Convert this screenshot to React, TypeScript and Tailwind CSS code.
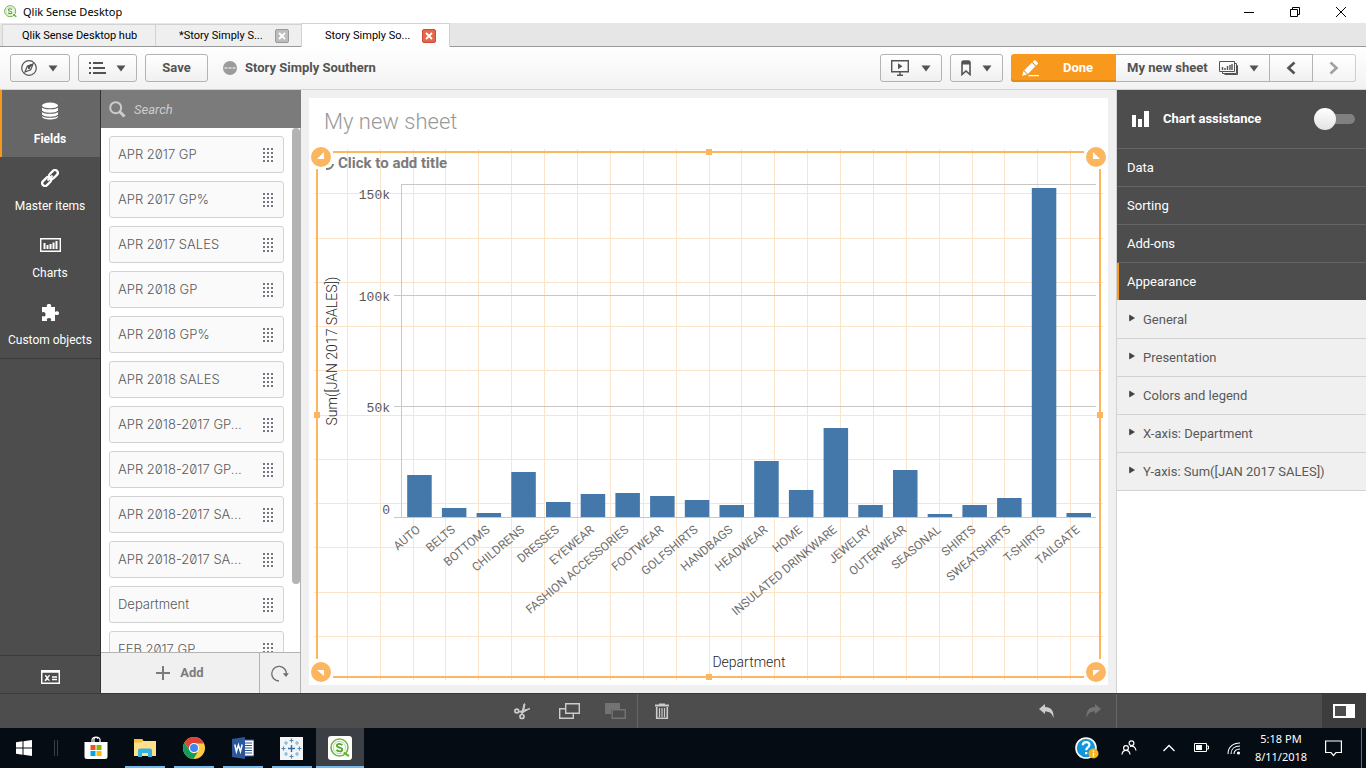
import type { ReactNode } from "react";

const fields = [
  "APR 2017 GP",
  "APR 2017 GP%",
  "APR 2017 SALES",
  "APR 2018 GP",
  "APR 2018 GP%",
  "APR 2018 SALES",
  "APR 2018-2017 GP...",
  "APR 2018-2017 GP...",
  "APR 2018-2017 SA...",
  "APR 2018-2017 SA...",
  "Department",
  "FEB 2017 GP",
];

const bars: [string, number][] = [
  ["AUTO", 475],
  ["BELTS", 508],
  ["BOTTOMS", 513],
  ["CHILDRENS", 472],
  ["DRESSES", 502],
  ["EYEWEAR", 494],
  ["FASHION ACCESSORIES", 493],
  ["FOOTWEAR", 496],
  ["GOLFSHIRTS", 500],
  ["HANDBAGS", 505],
  ["HEADWEAR", 461],
  ["HOME", 490],
  ["INSULATED DRINKWARE", 428],
  ["JEWELRY", 505],
  ["OUTERWEAR", 470],
  ["SEASONAL", 514],
  ["SHIRTS", 505],
  ["SWEATSHIRTS", 498],
  ["T-SHIRTS", 188],
  ["TAILGATE", 513],
];

const gridX = [347, 380, 413, 445, 478, 511, 544, 577, 610, 643, 676, 709, 741, 774, 807, 840, 873, 906, 939, 972, 1004, 1037, 1070];
const gridY = [193, 238, 282, 326, 370, 415, 459, 503, 547, 592, 636];

function Caret() {
  return (
    <svg width="10" height="7" viewBox="0 0 10 7" aria-hidden="true">
      <path d="M0.5 0.5h9L5 6.5z" fill="#545352" />
    </svg>
  );
}

function QlikMark({ size }: { size: number }) {
  return (
    <svg width={size} height={size} viewBox="0 0 20 20" fill="none" aria-hidden="true">
      <circle cx="9.500" cy="9.500" r="8.500" stroke="#6cb33f" strokeWidth="1.500" />
      <path d="M14.500 15l3.800 2.600" stroke="#6cb33f" strokeWidth="2.200" strokeLinecap="round" />
      <path d="M14.800 12.500a6.200 6.200 0 1 0-2.600 2.500" stroke="#a6d388" strokeWidth="0.900" />
      <path d="M12.200 7.200c-.6-1-1.500-1.400-2.700-1.400-1.600 0-2.700.7-2.700 1.800 0 2.700 5.500 1.200 5.500 3.800 0 1.200-1.100 1.900-2.800 1.900-1.400 0-2.400-.5-3-1.600" stroke="#5aa52e" strokeWidth="1.800" />
    </svg>
  );
}

function WindowBar() {
  return (
    <header className="flex h-[23px] shrink-0 items-center bg-white pr-[2px] pl-1">
      <QlikMark size={13} />
      <h1 className="flex-1 pl-[6px] font-['Noto_Sans'] text-[11px] leading-4 text-black">Qlik Sense Desktop</h1>
      <div className="flex items-center">
        <button aria-label="Minimize" className="grid h-[20px] w-[46px] place-items-center">
          <svg width="12" height="12"><path d="M1 6.500h10" stroke="#000" /></svg>
        </button>
        <button aria-label="Restore" className="grid h-[20px] w-[46px] place-items-center">
          <svg width="12" height="12" fill="none" stroke="#000"><path d="M1.500 3.500h7v7h-7zM3.500 3V1.500h7v7H9" /></svg>
        </button>
        <button aria-label="Close" className="grid h-[20px] w-[46px] place-items-center">
          <svg width="12" height="12" stroke="#000"><path d="M1 1l10 10M11 1L1 11" /></svg>
        </button>
      </div>
    </header>
  );
}

function TabClose({ active }: { active?: boolean }) {
  return (
    <button
      aria-label="Close tab"
      className={
        active
          ? "grid size-[14px] place-items-center rounded-[2px] border border-[#cf4a35] bg-[#e2694b]"
          : "grid size-[14px] place-items-center rounded-[2px] border border-[#999] bg-[#bdbdbd]"
      }
    >
      <svg width="8" height="8" stroke="#fff" strokeWidth="1.800"><path d="M1 1l6 6M7 1L1 7" /></svg>
    </button>
  );
}

function Tabs() {
  return (
    <nav aria-label="Open apps" className="flex h-6 shrink-0 items-end bg-[#e6e6e6] pl-[2px] text-[11px] leading-4 text-black shadow-[inset_0_-1px_0_#999]">
      <a href="#hub" className="mb-px flex h-[22px] w-[153px] items-center border-t border-l border-[#d2d2d2] bg-[#efefef] pl-[19px]">Qlik Sense Desktop hub</a>
      <div className="mb-px flex h-[22px] w-[146px] items-center justify-between border-t border-l border-[#d2d2d2] bg-[#efefef] pr-[12px] pl-[23px]">
        <a href="#story1">*Story Simply S...</a>
        <TabClose />
      </div>
      <div className="flex h-6 w-[149px] items-center justify-between border-x border-t border-[#d2d2d2] bg-white pr-[13px] pl-[23px]">
        <a href="#story2">Story Simply So...</a>
        <TabClose active />
      </div>
    </nav>
  );
}

const btn = "flex h-7 items-center rounded-[3px] border border-[#b3b3b3] bg-linear-to-b from-white to-[#f0f0f0]";

function Toolbar() {
  return (
    <div className="flex h-[43px] shrink-0 items-center border-b border-[#d2d2d2] bg-linear-to-b from-white to-[#f2f2f2] px-[10px] text-[13px] font-bold text-[#545352]">
      <button aria-label="Navigation" className={`${btn} w-[60px] justify-between pr-[11px] pl-[10px]`}>
        <svg width="16" height="16" viewBox="0 0 16 16" fill="none" stroke="#545352">
          <circle cx="8" cy="8" r="7.300" strokeWidth="1.200" />
          <path d="M12 4L9.700 9.700 4 12l2.300-5.700z" strokeWidth="1.200" />
          <path d="M12 4L6.300 6.300 8 8z" fill="#545352" />
          <circle cx="8" cy="8" r=".8" fill="#545352" />
        </svg>
        <Caret />
      </button>
      <button aria-label="App menu" className={`${btn} ml-2 w-[59px] justify-between px-[10px]`}>
        <svg width="17" height="12" viewBox="0 0 17 12" fill="#545352">
          <path d="M0 0h2v2H0zM0 5h2v2H0zM0 10h2v2H0zM4 0h10v2H4zM4 5h12v2H4zM4 10h13v2H4z" />
        </svg>
        <Caret />
      </button>
      <button className={`${btn} ml-2 w-[63px] justify-center`}>Save</button>
      <svg className="ml-[15px]" width="14" height="14" viewBox="0 0 14 14" aria-hidden="true">
        <circle cx="7" cy="7" r="7" fill="#9b9b9b" />
        <path d="M1.500 7h3M5.500 7h3M9.500 7h3" stroke="#fff" strokeWidth="1" />
      </svg>
      <span className="flex-1 pl-2">Story Simply Southern</span>

      <button aria-label="Stories" className={`${btn} w-[62px] justify-between px-[10px]`}>
        <svg width="18" height="16" viewBox="0 0 18 16" fill="none" stroke="#545352" strokeWidth="1.400">
          <path d="M.7 .7h16.600v11H.7z" />
          <path d="M7 3.200l4.500 3L7 9.200z" fill="#545352" stroke="none" />
          <path d="M9 12v3M6 15.300h6" />
        </svg>
        <Caret />
      </button>
      <button aria-label="Bookmarks" className={`${btn} ml-2 w-[53px] justify-between px-[10px]`}>
        <svg width="10" height="16" viewBox="0 0 10 16">
          <path d="M1 2.500C1 1.500 1.500 1 2.500 1h5C8.500 1 9 1.500 9 2.500V14.500L5 11l-4 3.500z" fill="none" stroke="#545352" strokeWidth="1.600" />
          <path d="M1 1h8v3.500H1z" fill="#545352" />
        </svg>
        <Caret />
      </button>
      <button className="ml-2 flex h-7 w-[105px] items-center rounded-l-[3px] bg-[#f8981d] pl-[11px] text-white shadow-[inset_0_-2px_0_#e38a17]">
        <svg width="18" height="17" viewBox="0 0 18 17" fill="#fff">
          <path d="M0 16l1.500-5 3.500 3.500zM2.200 10.300L9.800 2.700l3.600 3.600-7.600 7.600zM10.600 1.900L12 .5c.5-.5 1.200-.5 1.700 0l1.900 1.900c.5.500.5 1.200 0 1.700l-1.400 1.400zM7 15h10v1.300H6z" />
        </svg>
        <span className="flex-1 pl-[23px] text-left">Done</span>
      </button>
      <button className="flex h-7 w-[154px] items-center border-y border-r border-[#b3b3b3] bg-linear-to-b from-white to-[#f0f0f0] pl-[11px]">
        <span className="flex-1 text-left">My new sheet</span>
        <svg className="mr-[11px]" width="19" height="14" viewBox="0 0 19 14" fill="none" stroke="#545352">
          <path d="M.5 .5h15v10h-15zM16 2.500h1.500v10h-14V11M17.500 4.500h1v9h-13" />
          <path d="M3.500 9V6M6 9V7M8.500 9V5M11 9V4M13 9V3" strokeWidth="1.400" />
        </svg>
        <span className="mr-[10px]"><Caret /></span>
      </button>
      <button aria-label="Previous sheet" className="grid h-7 w-[43px] place-items-center border-y border-r border-[#b3b3b3] bg-linear-to-b from-white to-[#f0f0f0]">
        <svg width="10" height="14" fill="none" stroke="#545352" strokeWidth="2.600"><path d="M8.500 1.500L2.500 7l6 5.500" /></svg>
      </button>
      <button aria-label="Next sheet" className="grid h-7 w-[43px] place-items-center rounded-r-[3px] border-y border-r border-[#cfcfcf] bg-linear-to-b from-white to-[#f4f4f4]">
        <svg width="10" height="14" fill="none" stroke="#a0a0a0" strokeWidth="2.600"><path d="M1.500 1.500l6 5.500-6 5.500" /></svg>
      </button>
    </div>
  );
}

function NavItem({ label, active, children }: { label: string; active?: boolean; children: ReactNode }) {
  return (
    <button
      className={
        active
          ? "flex h-[67px] w-full flex-col items-center border-l-2 border-[#f8981d] bg-[#666] pt-3 pr-[2px] font-bold"
          : "flex h-[67px] w-full flex-col items-center pt-3"
      }
    >
      <span className="grid h-[18px] place-items-center">{children}</span>
      <span className="pt-[11px] leading-4 whitespace-nowrap">{label}</span>
    </button>
  );
}

function SideNav() {
  return (
    <nav aria-label="Assets" className="flex w-[101px] shrink-0 flex-col border-r border-[#333] bg-[#4d4d4d] text-[12px] text-white">
      <NavItem label="Fields" active>
        <svg width="18" height="18" viewBox="0 0 18 18">
          <path d="M1 3.500v11c0 4 16 4 16 0v-11z" fill="#fff" />
          <ellipse cx="9" cy="3.500" rx="8" ry="3" fill="#fff" />
          <path d="M1 4.500c1.500 3 14.500 3 16 0M1 9c1.500 3 14.500 3 16 0M1 13c1.500 3 14.500 3 16 0" fill="none" stroke="#666" strokeWidth="1.200" />
        </svg>
      </NavItem>
      <NavItem label="Master items">
        <svg width="18" height="18" viewBox="0 0 18 18" fill="none" stroke="#fff" strokeWidth="2.300">
          <rect x="7.400" y="2.600" width="10" height="5.600" rx="2.800" transform="rotate(-45 12.400 5.400)" />
          <rect x="0.600" y="9.800" width="10" height="5.600" rx="2.800" transform="rotate(-45 5.600 12.600)" />
          <path d="M6.500 11.500l5-5" strokeWidth="1.800" />
        </svg>
      </NavItem>
      <NavItem label="Charts">
        <svg width="21" height="14" viewBox="0 0 21 14" fill="none" stroke="#fff">
          <path d="M.7 .7h19.600v12.600H.7z" strokeWidth="1.400" />
          <path d="M4.500 11V5M7.500 11V7M10.500 11V6M13.500 11V4.500M16.500 11V3" strokeWidth="2" />
        </svg>
      </NavItem>
      <NavItem label="Custom objects">
        <svg width="17" height="17" viewBox="0 0 17 17" fill="#fff">
          <path d="M0 3h5.300C4 1.500 5 0 7 0s3 1.500 1.700 3H13v5c1.500-1.300 4-.8 4 1.200s-2.500 2.500-4 1.200V17H8.800c1.100-2-.2-3-1.800-3s-2.900 1-1.800 3H0v-5c2 1.100 3.600.1 3.600-1.600S2 7.300 0 8.600z" />
        </svg>
      </NavItem>
      <div className="flex-1 border-t border-[#3a3a3a]" />
      <button aria-label="Variables" className="grid h-[38px] place-items-center border-t border-[#3a3a3a] pt-[5px]">
        <svg width="19" height="14" viewBox="0 0 19 14" fill="none" stroke="#fff">
          <path d="M.7 .7h17.600v12.600H.7zM0 2h19" strokeWidth="1.500" />
          <path d="M4 5.500c2 0 2.500 5 4.500 5M8.800 5.500c-2 0-3 5-5 5M11 7h5M11 9.500h5" strokeWidth="1.500" />
        </svg>
      </button>
    </nav>
  );
}

function Grip() {
  return (
    <svg width="11" height="14" viewBox="0 0 11 14" fill="#737680" aria-hidden="true">
      {[0, 4, 8, 12].map((y) => [0, 4, 8].map((x) => <rect key={`${x}-${y}`} x={x} y={y} width="2" height="2" />))}
    </svg>
  );
}

function FieldPanel() {
  return (
    <aside className="flex min-h-0 w-[200px] shrink-0 flex-col border-r border-[#b3b3b3] bg-white text-[13px] text-[#595959]">
      <div className="-mr-px flex h-[38px] shrink-0 items-center bg-[#7b7b7b] pl-2">
        <svg width="17" height="17" viewBox="0 0 17 17" fill="none" stroke="#ccc" aria-hidden="true">
          <circle cx="6.700" cy="6.700" r="5.500" strokeWidth="2" />
          <path d="M10.500 10.500l5 5" strokeWidth="3" />
        </svg>
        <input type="search" aria-label="Search" placeholder="Search" className="w-40 bg-transparent pt-[2px] pl-2 italic text-white outline-none placeholder:text-[#ccc]" />
      </div>
      <div className="flex min-h-0 flex-1">
        <ul className="flex min-w-0 flex-1 flex-col gap-2 overflow-hidden p-2">
          {fields.map((f, i) => (
            <li key={i} className="flex h-[37px] shrink-0 items-center justify-between rounded-[3px] border border-[#d2d2d2] bg-[#fafafa] pr-[9px] pl-2">
              <span className="font-[Inter] font-light whitespace-nowrap slashed-zero">{f}</span>
              <Grip />
            </li>
          ))}
        </ul>
        <div className="flex w-2 flex-col">
          <div className="h-[87%] rounded-full bg-[#b3b3b3]" />
        </div>
      </div>
      <div className="flex h-[41px] shrink-0 border-t border-[#b3b3b3] bg-[#f0f0f0] font-bold text-[#7b7b7b]">
        <button className="flex flex-1 items-center justify-center gap-[10px]">
          <svg width="14" height="14" stroke="#7b7b7b" strokeWidth="2"><path d="M7 0v14M0 7h14" /></svg>
          Add
        </button>
        <button aria-label="Refresh" className="grid w-[41px] place-items-center border-l border-[#b3b3b3]">
          <svg width="18" height="17" viewBox="0 0 18 17" fill="none" stroke="#6e6e6e" strokeWidth="1.300">
            <path d="M8 16a7.300 7.300 0 1 1 7.300-6.500" />
            <path d="M11.800 8.300h6L15 12z" fill="#6e6e6e" stroke="none" />
          </svg>
        </button>
      </div>
    </aside>
  );
}

function Chart() {
  return (
    <svg
      className="min-h-0 w-full flex-1 overflow-visible font-[Roboto]"
      viewBox="309 148 799 537"
      role="img"
      aria-label="Bar chart of Sum([JAN 2017 SALES]) by Department"
    >
      <g fill="#fce4cb">
        {gridX.map((x) => <rect key={x} x={x} y="149" width="1" height="531" />)}
        {gridY.map((y) => <rect key={y} x="314" y={y} width="789" height="1" />)}
      </g>
      <g fill="#c8c8c8">
        <rect x="401" y="184" width="1" height="334" />
        <rect x="401" y="184" width="695" height="1" />
        <rect x="394" y="295" width="702" height="1" />
        <rect x="394" y="406" width="702" height="1" />
        <rect x="394" y="517" width="702" height="1" />
      </g>
      <g fill="#595959" fontSize="13" textAnchor="end" className="font-['Liberation_Mono']">
        <text x="390" y="199">150k</text>
        <text x="390" y="301">100k</text>
        <text x="390" y="412">50k</text>
        <text x="390" y="514">0</text>
      </g>
      {bars.map(([name, top], i) => {
        const x = 407.2 + i * 34.7;
        return (
          <g key={name}>
            <rect x={x} y={top} width="24.500" height={517 - top} fill="#4477aa" />
            <text transform={`translate(${x + 14} 531) rotate(-40)`} textAnchor="end" fontSize="12" fill="#6e6e6e">{name}</text>
          </g>
        );
      })}
      <text transform="translate(337 351) rotate(-90)" textAnchor="middle" fontSize="14" fontWeight="300" fill="#262626">Sum([JAN 2017 SALES])</text>
      <text x="749" y="667" textAnchor="middle" fontSize="14" fontWeight="300" fill="#262626">Department</text>
      <text x="338" y="168" fontSize="15" fontWeight="700" fill="#7b7b7b">Click to add title</text>
      <path d="M326 169c4 0 7-2 7-5" fill="none" stroke="#7b7b7b" strokeWidth="2" />
      <g fill="#fbb65f">
        <rect x="333" y="151" width="751" height="2" />
        <rect x="333" y="676" width="751" height="2" />
        <rect x="316" y="169" width="2" height="490" />
        <rect x="1099" y="169" width="2" height="490" />
        <rect x="706" y="149" width="6" height="6" />
        <rect x="706" y="674" width="6" height="6" />
        <rect x="314" y="412" width="6" height="6" />
        <rect x="1097" y="412" width="6" height="6" />
      </g>
      <g fill="#fbb65f" stroke="#fff" strokeWidth="2">
        <circle cx="321" cy="157" r="11" />
        <circle cx="1096" cy="157" r="11" />
        <circle cx="321" cy="672" r="11" />
        <circle cx="1096" cy="672" r="11" />
      </g>
      <g fill="#fff">
        <path d="M317 159h7v-7z" />
        <path d="M1100 159h-7v-7z" />
        <path d="M317 670h7v6z" />
        <path d="M1100 670h-7v6z" />
      </g>
    </svg>
  );
}

function Sheet() {
  return (
    <main className="flex min-w-0 flex-1 bg-[#f0f0f0] p-2">
      <section className="flex min-h-0 min-w-0 flex-1 flex-col bg-white">
        <h2 className="h-[50px] shrink-0 pt-2 pl-[15px] text-[22px] leading-8 font-light text-[#999]">My new sheet</h2>
        <Chart />
      </section>
    </main>
  );
}

const sections = ["Data", "Sorting", "Add-ons", "Appearance"];
const subsections = ["General", "Presentation", "Colors and legend", "X-axis: Department", "Y-axis: Sum([JAN 2017 SALES])"];

function Properties() {
  return (
    <aside className="flex w-[250px] shrink-0 flex-col border-l border-[#d2d2d2] bg-white text-[13px]">
      <label className="flex h-[59px] items-center border-b border-[#666] bg-[#4d4d4d] pr-[11px] pl-[15px] font-bold text-white">
        <svg width="17" height="16" viewBox="0 0 17 16" fill="#fff" aria-hidden="true">
          <path d="M0 4h4v12H0zM6 8h4v8H6zM12 0h5v16h-5z" />
        </svg>
        <span className="flex-1 pl-[14px]">Chart assistance</span>
        <input type="checkbox" className="peer sr-only" />
        <span className="flex h-[10px] w-[41px] items-center rounded-full bg-linear-to-r from-transparent from-20% to-[#808080] to-20%">
          <span className="size-[22px] shrink-0 rounded-full bg-linear-to-b from-white to-[#e3e3e3]" />
        </span>
      </label>
      {sections.map((s) => (
        <button
          key={s}
          className={
            s === "Appearance"
              ? "flex h-[38px] items-center border-b border-b-[#f0f0f0] bg-[#4d4d4d] pl-[10px] text-white shadow-[inset_2px_0_0_#f8981d]"
              : "flex h-[38px] items-center border-b border-[#666] bg-[#4d4d4d] pl-[10px] text-white"
          }
        >
          {s}
        </button>
      ))}
      {subsections.map((s) => (
        <button key={s} className="flex h-[38px] items-center border-b border-[#d2d2d2] bg-[#f0f0f0] pl-[12px] text-[#595959]">
          <svg className="mb-1" width="6" height="8" aria-hidden="true"><path d="M0.500 1l5 3-5 3z" fill="#404040" stroke="#404040" strokeWidth=".6" /></svg>
          <span className="pl-2">{s}</span>
        </button>
      ))}
    </aside>
  );
}

function EditBar() {
  return (
    <div className="flex h-[35px] shrink-0 border-t border-[#3a3a3a] bg-[#4d4d4d]">
      <div className="flex min-w-0 flex-1 items-stretch pl-[501px]">
        <button aria-label="Cut" className="grid w-[43px] place-items-center">
          <svg width="17" height="17" viewBox="0 0 17 17" fill="none" stroke="#ccc">
            <circle cx="2.800" cy="8" r="1.900" strokeWidth="1.700" />
            <circle cx="8" cy="13.500" r="2" strokeWidth="1.700" />
            <path d="M4.500 8.800L16 5.500 9 9.500zM7.500 11.500L10 .8l1 .3-1.500 7.500z" fill="#ccc" strokeWidth="1" />
          </svg>
        </button>
        <button aria-label="Copy" className="grid w-[50px] place-items-center">
          <svg width="21" height="16" viewBox="0 0 21 16" fill="none" stroke="#ccc" strokeWidth="1.400">
            <path d="M6.700 .7h13.600v9.600H6.700zM6.700 5.700h-6v9.600h13.600v-5" />
          </svg>
        </button>
        <button aria-label="Paste" disabled className="grid w-[44px] place-items-center border-r border-[#666]">
          <svg width="21" height="16" viewBox="0 0 21 16" fill="none" stroke="#737373" strokeWidth="1.400">
            <path d="M0 0h15v6H6v5H0z" fill="#737373" stroke="none" />
            <path d="M7.200 6.700h13.100v8.600H7.200z" />
          </svg>
        </button>
        <button aria-label="Delete" className="grid w-[48px] place-items-center">
          <svg width="14" height="16" viewBox="0 0 14 16" fill="none" stroke="#ccc">
            <path d="M4 0.500h6v1h4v2H0v-2h4z" fill="#ccc" stroke="none" />
            <path d="M1.700 4v11.200h10.600V4" strokeWidth="1.600" />
            <path d="M4.500 5v9M7 5v9M9.500 5v9" strokeWidth="1.200" />
          </svg>
        </button>
        <div className="flex flex-1 items-center justify-end gap-[30px] pr-[15px]">
          <button aria-label="Undo">
            <svg width="16" height="14" viewBox="0 0 16 14" fill="#ccc"><path d="M0 5l6-5v3c6 0 9 3.500 8.500 11C13 9.500 11 7.500 6 7.500V10z" /></svg>
          </button>
          <button aria-label="Redo" disabled>
            <svg width="16" height="14" viewBox="0 0 16 14" fill="#737373"><path d="M16 5l-6-5v3C4 3 1 6.500 1.500 14 3 9.500 5 7.500 10 7.500V10z" /></svg>
          </button>
        </div>
      </div>
      <div className="flex w-[250px] justify-end border-l border-[#666]">
        <button aria-label="Toggle properties" className="grid w-11 place-items-center bg-[#3d3d3d]">
          <svg width="22" height="14"><path d="M0 0h22v14H0z" fill="#fff" /><path d="M2 2h11v10H2z" fill="#4d4d4d" /></svg>
        </button>
      </div>
    </div>
  );
}

function Task({ label, active, idle, children }: { label: string; active?: boolean; idle?: boolean; children: ReactNode }) {
  return (
    <button
      aria-label={label}
      className={active ? "flex h-10 w-12 flex-col items-center bg-[#3c3f44]" : "flex h-10 w-[49px] flex-col items-center"}
    >
      <span className="grid flex-1 place-items-center pt-[2px]">{children}</span>
      <span className={active ? "h-[2px] w-12 bg-[#76b9ed]" : idle ? "h-[2px] w-10" : "h-[2px] w-10 bg-[#76b9ed]"} />
    </button>
  );
}

function Taskbar() {
  return (
    <footer className="flex h-10 shrink-0 items-center bg-[#060c14] text-white">
      <button aria-label="Start" className="grid h-10 w-12 place-items-center">
        <svg width="16" height="16" fill="#fff"><path d="M0 2.300L6.500 1.300v6.200H0zM7.500 1.200L16 0v7.500H7.500zM0 8.500h6.500v6.200L0 13.700zM7.500 8.500H16V16l-8.500-1.200z" /></svg>
      </button>
      <div className="mr-[13px] ml-[6px] h-4 w-1 border-x border-[#3c3f44]" />
      <Task label="Store" idle>
        <svg width="24" height="24" viewBox="0 0 24 24">
          <path d="M8 8V4c0-4 8-4 8 0v4M10 6V3c0-2 4-2 4 0" fill="none" stroke="#fff" strokeWidth="1.200" />
          <path d="M0.500 6h23v14.500a2.500 2.500 0 0 1-2.500 2.500H3a2.500 2.500 0 0 1-2.500-2.500z" fill="#fff" />
          <path d="M6.500 9h5v5h-5z" fill="#f25022" /><path d="M12.500 9h5v5h-5z" fill="#7fba00" />
          <path d="M6.500 15h5v5h-5z" fill="#00a4ef" /><path d="M12.500 15h5v5h-5z" fill="#ffb900" />
        </svg>
      </Task>
      <Task label="File Explorer">
        <svg width="22" height="20" viewBox="0 0 22 20">
          <path d="M0 1h8l1.500 2H22v15H0z" fill="#ffe08a" />
          <path d="M0 1h8l1 1.500-1 2H0z" fill="#f5c041" />
          <path d="M4 19v-6.500a2 2 0 0 1 2-2h10a2 2 0 0 1 2 2V19h-4v-4H8v4z" fill="#34b2e4" />
        </svg>
      </Task>
      <Task label="Chrome">
        <svg width="22" height="22" viewBox="0 0 22 22">
          <circle cx="11" cy="11" r="11" fill="#fc4" />
          <path d="M1.500 5.500A11 11 0 0 1 20.500 5.500L21 6.500H11A5 5 0 0 0 6.300 12.500z" fill="#db4437" />
          <path d="M1.500 5.500A11 11 0 0 0 10.500 22l4.700-7.800A5 5 0 0 1 6.700 13.500z" fill="#0f9d58" />
          <circle cx="11" cy="11" r="5" fill="#fff" /><circle cx="11" cy="11" r="4" fill="#4285f4" />
        </svg>
      </Task>
      <Task label="Word">
        <svg width="22" height="22" viewBox="0 0 22 22">
          <path d="M12 3h10v16H12z" fill="#fff" stroke="#2b579a" />
          <path d="M13 6h7M13 8.500h7M13 11h7M13 13.500h7M13 16h7" stroke="#2b579a" />
          <path d="M0 2l13-2v22L0 20z" fill="#2b579a" />
          <path d="M2.800 7.500l1.600 7 2-6.500 2 6.500 1.800-7" fill="none" stroke="#fff" strokeWidth="1.500" />
        </svg>
      </Task>
      <Task label="Tableau">
        <svg width="23" height="23" viewBox="0 0 23 23" fill="none">
          <path d="M0 0h23v23H0z" fill="#f2f4f5" />
          <path d="M11.500 8v7M8 11.500h7" stroke="#2f6fa3" strokeWidth="1.400" />
          <path d="M11.500 1.500v4M9.500 3.500h4M11.500 17.500v4M9.500 19.500h4M3.500 9.500v4M1.500 11.500h4M19.500 9.500v4M17.500 11.500h4" stroke="#4d8fbf" strokeWidth="1.200" />
          <path d="M6 4v4M4 6h4M17 4v4M15 6h4M6 15v4M4 17h4M17 15v4M15 17h4" stroke="#79b3d6" strokeWidth="1.200" />
        </svg>
      </Task>
      <Task label="Qlik Sense" active>
        <span className="grid size-6 place-items-center rounded-[3px] bg-white"><QlikMark size={20} /></span>
      </Task>
      <div className="flex flex-1 items-center justify-end">
        <svg className="mr-[22px]" width="24" height="22" viewBox="0 0 24 22">
          <circle cx="11" cy="11" r="10" fill="#1296db" stroke="#fff" strokeWidth="1.600" />
          <path d="M7.800 8.300c.2-4.200 7-4 6.600-.2-.2 2.400-3.200 2.400-3.200 5.200M11.200 15v2.200" fill="none" stroke="#fff" strokeWidth="2.200" />
          <circle cx="18.500" cy="16.500" r="5" fill="#f5b31c" /><path d="M18.500 13.500v1.200M18.500 15.800v4" stroke="#fff" strokeWidth="1.300" />
        </svg>
        <svg className="mr-[26px]" width="16" height="16" viewBox="0 0 16 16" fill="none" stroke="#fff" strokeWidth="1.200">
          <circle cx="5" cy="8" r="2.400" /><path d="M1 14.500c.5-5.500 7.500-5.500 8 0" />
          <circle cx="10.500" cy="3.200" r="2.400" /><path d="M9 6.500c3-1.300 5.500.5 6 4" />
        </svg>
        <svg className="mr-[19px]" width="12" height="8" fill="none" stroke="#fff" strokeWidth="1.300"><path d="M.5 7L6 1.500 11.500 7" /></svg>
        <svg className="mr-[18px]" width="15" height="10" fill="none" stroke="#fff"><path d="M.5 .5h12v8H.5zM13 3h1.500v3H13" /><path d="M2 2h6v5H2z" fill="#fff" stroke="none" /></svg>
        <svg className="mr-[10px]" width="14" height="13" viewBox="0 0 14 13" fill="none" stroke="#fff" strokeWidth="1.100">
          <path d="M1 12C1 5 6 1 13 1M4 12c0-5 3.500-8 9-8M7 12c0-3 2-5 6-5" />
          <circle cx="11.500" cy="11" r="1.600" fill="#fff" stroke="none" />
        </svg>
        <div className="w-[60px] text-center font-['Noto_Sans'] text-[11px] leading-[18px] whitespace-nowrap">
          <div>5:18 PM</div>
          <div>8/11/2018</div>
        </div>
        <button aria-label="Notifications" className="mr-[19px] ml-[14px]">
          <svg width="17" height="17" fill="none" stroke="#fff" strokeWidth="1.200"><path d="M.6 1h15.800v11.500h-5.400L8.500 15.500 6 12.500H.6z" /></svg>
        </button>
        <div className="mr-1 h-10 w-px bg-[#6b6e72]" />
      </div>
    </footer>
  );
}

export default function App() {
  return (
    <div className="flex h-screen flex-col overflow-hidden font-[Roboto,sans-serif]">
      <WindowBar />
      <Tabs />
      <Toolbar />
      <div className="flex min-h-0 flex-1">
        <SideNav />
        <FieldPanel />
        <Sheet />
        <Properties />
      </div>
      <EditBar />
      <Taskbar />
    </div>
  );
}
